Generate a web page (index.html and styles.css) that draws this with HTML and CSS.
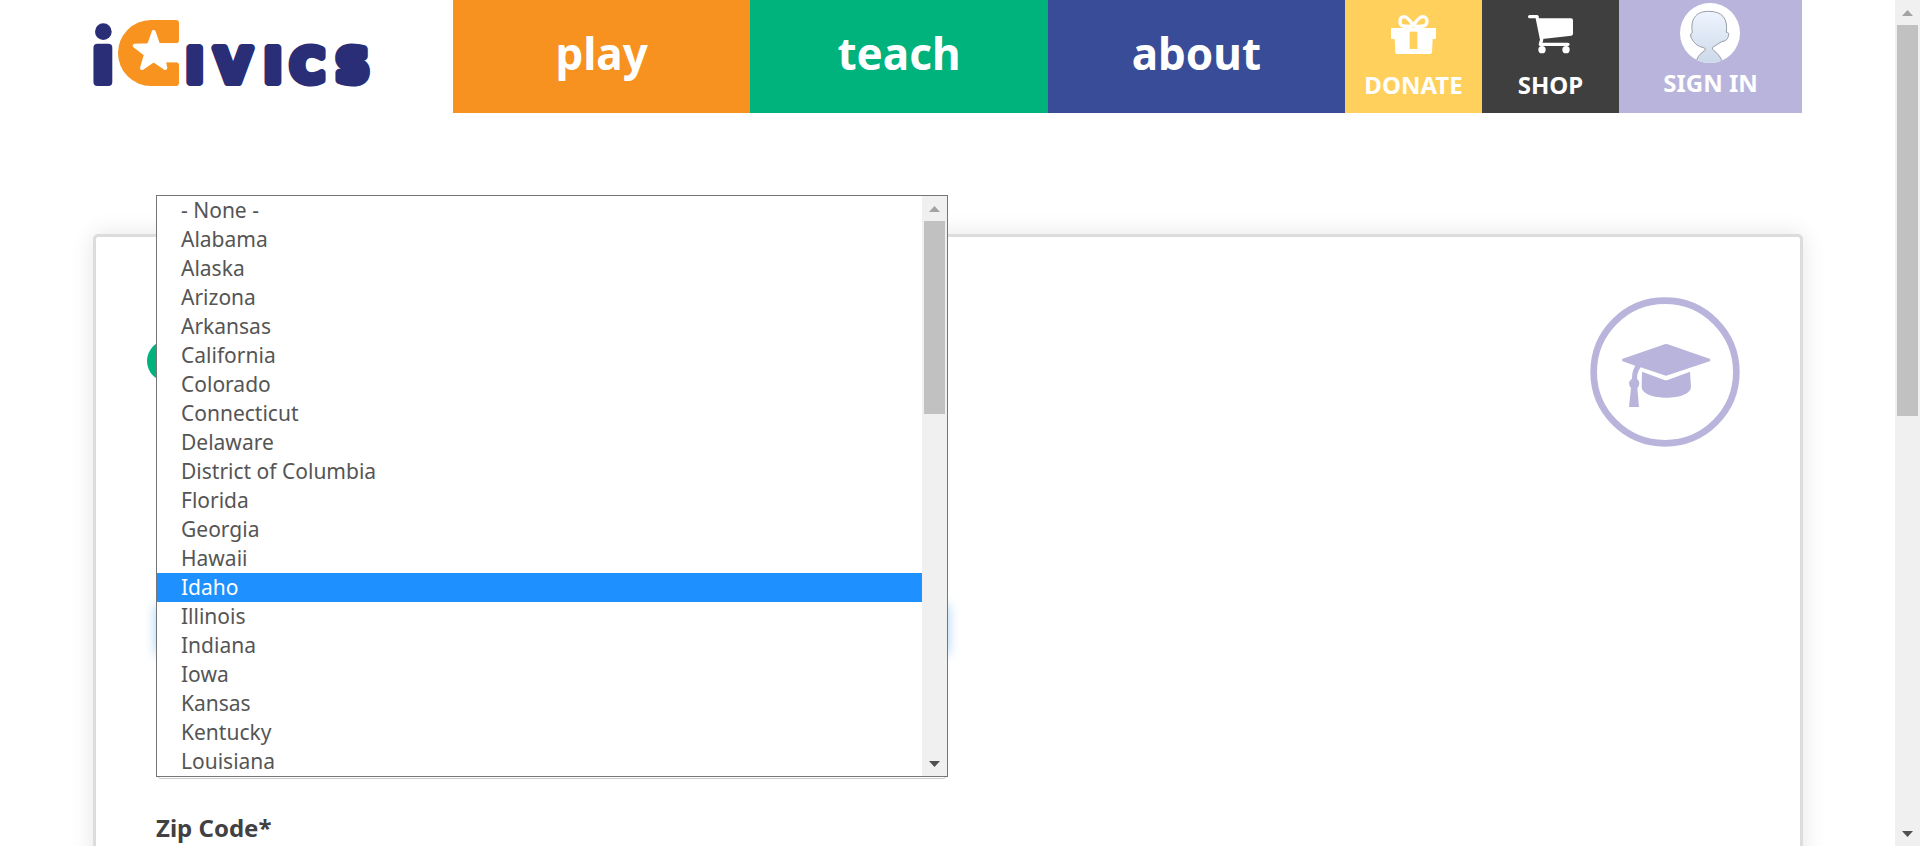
FILE: index.html
```html
<!DOCTYPE html>
<html lang="en">
<head>
<meta charset="utf-8">
<meta name="viewport" content="width=device-width, initial-scale=1">
<title>iCivics</title>
<link rel="stylesheet" href="styles.css">
</head>
<body>
<div class="window">
  <div class="page">
    <header class="header">
      <a class="logo" href="#" aria-label="iCivics home">
        <svg class="logo-art" viewBox="39 60 840 198">
          <g class="logo-text">
            <text class="logo-i" x="37" y="246">ı</text>
            <text class="logo-rest" x="318 405 553 631 767" y="246">IVICS</text>
          </g>
          <circle cx="70" cy="95" r="25" fill="#2a2e77"/>
          <path fill="#f7931e" d="M213 60H287Q297 60 297 70V120Q297 130 287 130H200V187H287Q297 187 297 197V248Q297 258 287 258H213A99 99 0 0 1 213 60Z"/>
          <path fill="#fff" stroke="#fff" stroke-width="12" stroke-linejoin="round" d="M221 96L235 136H285V181H251L256 204L221 180L186 204L198 163L164 137L207 136Z"/>
        </svg>
      </a>
      <nav class="nav">
        <a class="nav-main play" href="#">play</a>
        <a class="nav-main teach" href="#">teach</a>
        <a class="nav-main about" href="#">about</a>
        <a class="nav-tool donate" href="#">
          <svg class="tool-icon" viewBox="1173 45 135 117">
            <path fill="#fff" d="M1173 84H1308V114Q1308 117 1305 117H1298L1296 157Q1295 162 1290 162H1191Q1186 162 1186 157L1184 117H1176Q1173 117 1173 114Z"/>
            <path fill="#ffd05c" d="M1229 95H1252V147H1229Z"/>
            <path fill="none" stroke="#fff" stroke-width="10" d="M1240 77C1231 62 1221 50 1211 50C1197 50 1196 76 1210 78C1220 80 1232 80 1240 77C1249 62 1259 50 1269 50C1284 50 1285 76 1271 78C1261 80 1249 80 1240 77Z"/>
          </svg>
          <span>DONATE</span>
        </a>
        <a class="nav-tool shop" href="#">
          <svg class="tool-icon" viewBox="264 45 135 117">
            <path fill="none" stroke="#fff" stroke-width="10" stroke-linecap="round" stroke-linejoin="round" d="M269 50H291L305 119L301 133H384"/>
            <path fill="#fff" d="M295 55H393Q399 55 399 61V101Q399 106 394 107L307 117Z"/>
            <circle cx="306" cy="149" r="11" fill="#fff"/><circle cx="378" cy="149" r="11" fill="#fff"/>
          </svg>
          <span>SHOP</span>
        </a>
        <a class="nav-tool sign-in" href="#">
          <svg class="avatar" viewBox="723 9 180 180">
            <defs>
              <linearGradient id="shade" x1="0" y1="0" x2="0" y2="1"><stop offset="0" stop-color="#eff4ff"/><stop offset="1" stop-color="#cad8e8"/></linearGradient>
              <clipPath id="round"><circle cx="813" cy="99" r="90"/></clipPath>
            </defs>
            <circle cx="813" cy="99" r="90" fill="#fff"/>
            <path clip-path="url(#round)" fill="url(#shade)" stroke="#979da4" stroke-width="3" d="M768 195Q774 165 797 152Q803 146 794 143Q768 139 756 112Q752 99 760 98C754 61 767 34 809 34C849 34 867 54 862 97Q872 96 868 109Q865 123 848 125L821 142Q818 148 825 152Q848 169 852 195Z"/>
          </svg>
          <span>SIGN IN</span>
        </a>
      </nav>
    </header>

    <main class="card">
      <div class="card-top">
        <span class="step"></span>
        <svg class="badge" viewBox="90 261 450 450" fill="#b9b4db">
          <circle cx="315" cy="486" r="214" fill="none" stroke="#b9b4db" stroke-width="20"/>
          <path d="M188 446L314 403Q318 401 323 403L449 446Q454 450 449 454L323 496Q318 498 313 496L242 472Q231 487 231 506Q238 512 238 520Q238 528 232 534L237 591H207L213 534Q207 528 207 520Q207 512 216 506Q216 482 226 467L188 454Q183 450 188 446Z"/>
          <path d="M246 485L313 510Q318 512 323 510L390 485L393 530C393 574 245 574 245 530Z"/>
        </svg>
      </div>
      <form class="form">
        <div class="field">
          <div class="control state-control"></div>
          <div class="menu">
            <select class="options" size="20" aria-label="State">
              <option>- None -</option>
              <option>Alabama</option>
              <option>Alaska</option>
              <option>Arizona</option>
              <option>Arkansas</option>
              <option>California</option>
              <option>Colorado</option>
              <option>Connecticut</option>
              <option>Delaware</option>
              <option>District of Columbia</option>
              <option>Florida</option>
              <option>Georgia</option>
              <option>Hawaii</option>
              <option class="current">Idaho</option>
              <option>Illinois</option>
              <option>Indiana</option>
              <option>Iowa</option>
              <option>Kansas</option>
              <option>Kentucky</option>
              <option>Louisiana</option>
            </select>
            <div class="scrollbar menu-scroll">
              <button class="arrow" type="button" aria-label="Scroll up"><svg viewBox="0 0 11 6"><path fill="#a3a3a3" d="M0 6L5.500 0L11 6Z"/></svg></button>
              <div class="thumb"></div><div class="track"></div>
              <button class="arrow" type="button" aria-label="Scroll down"><svg viewBox="0 0 11 6"><path fill="#505050" d="M0 0H11L5.500 6Z"/></svg></button>
            </div>
          </div>
        </div>
        <div class="field">
          <input class="control" type="text" aria-label="City">
        </div>
        <div class="field">
          <label class="label" for="zip">Zip Code*</label>
          <input class="control" id="zip" type="text">
        </div>
      </form>
    </main>
  </div>
  <div class="scrollbar page-scroll">
    <button class="arrow" type="button" aria-label="Scroll page up"><svg viewBox="0 0 11 6"><path fill="#a3a3a3" d="M0 6L5.500 0L11 6Z"/></svg></button>
    <div class="thumb"></div><div class="track"></div>
    <button class="arrow" type="button" aria-label="Scroll page down"><svg viewBox="0 0 11 6"><path fill="#505050" d="M0 0H11L5.500 6Z"/></svg></button>
  </div>
</div>
</body>
</html>
```
FILE: styles.css
```css
* { box-sizing: border-box; }
body {
  margin: 0;
  background: #fff;
  color: #414042;
  font-family: "Noto Sans", "Open Sans", sans-serif;
}
.window {
  display: flex;
  height: 100vh;
  overflow: hidden;
}
.page {
  flex: 1;
  min-width: 0;
  padding: 0 92px 0 93px;
  overflow: hidden;
}

.header { display: flex; padding-right: 1px; }
.logo { flex: none; width: 360px; padding-top: 20px; }
.logo-art { display: block; width: 280px; height: 66px; overflow: visible; }
.logo-text {
  fill: #2a2e77;
  stroke: #2a2e77;
  stroke-width: 24px;
  stroke-linejoin: round;
  font-family: "DejaVu Sans", sans-serif;
  font-weight: 700;
}
.logo-i { font-size: 186px; }
.logo-rest { font-size: 140px; }

.nav { display: flex; flex: 1; height: 113px; }
.nav a { color: #fff; font-weight: 700; text-decoration: none; }
.nav-main {
  display: flex;
  flex: 1;
  justify-content: center;
  padding-top: 20px;
  font-size: 44px;
  line-height: 66px;
}
.nav-tool {
  display: flex;
  flex: none;
  flex-direction: column;
  align-items: center;
  width: 137px;
  padding-top: 15px;
  font-size: 24px;
  line-height: 32px;
}
.play { background: #f79220; }
.teach { background: #00b27c; }
.about { background: #394c98; }
.donate { background: #ffd05c; }
.shop { background: #3f3f3f; }
.nav .sign-in { width: 183px; padding-top: 3px; background: #b9b4db; }
.tool-icon { width: 45px; height: 39px; margin-bottom: 15px; }
.avatar { width: 60px; height: 60px; margin-bottom: 4px; }

.card {
  margin-top: 121px;
  padding-bottom: 60px;
  border: 3px solid #dcdcdc;
  border-radius: 5px;
  background: #fff;
  box-shadow: 0 0 24px rgba(0, 0, 0, 0.1);
}
.card-top {
  display: flex;
  justify-content: space-between;
  padding: 60px 60px 0 51px;
}
.step {
  width: 42px;
  height: 42px;
  margin-top: 43px;
  border-radius: 50%;
  background: #00b27c;
}
.badge { width: 150px; height: 150px; }

.form {
  display: grid;
  gap: 73px;
  width: 50%;
  min-width: 792px;
  padding: 157px 0 0 60px;
}
.field { position: relative; width: 792px; }
.control {
  display: block;
  width: 100%;
  height: 51px;
  border: 1px solid #ccc;
  border-radius: 5px;
  background: #fff;
}
.state-control {
  border-color: #66afe9;
  box-shadow: 0 0 12px rgba(102, 175, 233, 0.6);
}
.label {
  display: block;
  margin-top: -41px;
  margin-bottom: 8px;
  font-size: 24px;
  font-weight: 700;
  line-height: 34px;
}

.menu {
  position: absolute;
  z-index: 1;
  bottom: -122px;
  left: 0;
  display: flex;
  width: 100%;
  border: 1px solid #767676;
  background: #fff;
}
.options {
  flex: 1;
  height: 580px;
  padding: 0;
  border: 0;
  outline: 0;
  background: #fff;
  color: #555;
  font: 21px/29px "Noto Sans", "Open Sans", sans-serif;
  scrollbar-width: none;
}
.options option { height: 29px; min-height: 29px; padding: 0 0 0 24px; line-height: 29px; }
.options .current { background: #1e90ff; color: #fff; }

.scrollbar {
  display: flex;
  flex: none;
  flex-direction: column;
  width: 25px;
  background: #f0f0f0;
}
.arrow {
  display: grid;
  flex: none;
  place-items: center;
  height: 25px;
  padding: 0;
  border: 0;
  background: none;
}
.arrow svg { width: 11px; height: 6px; }
.thumb { margin: 0 2px; background: #c1c1c1; }
.menu-scroll .thumb { flex: 193; }
.menu-scroll .track { flex: 337; }
.page-scroll .thumb { flex: 391; }
.page-scroll .track { flex: 405; }
```
